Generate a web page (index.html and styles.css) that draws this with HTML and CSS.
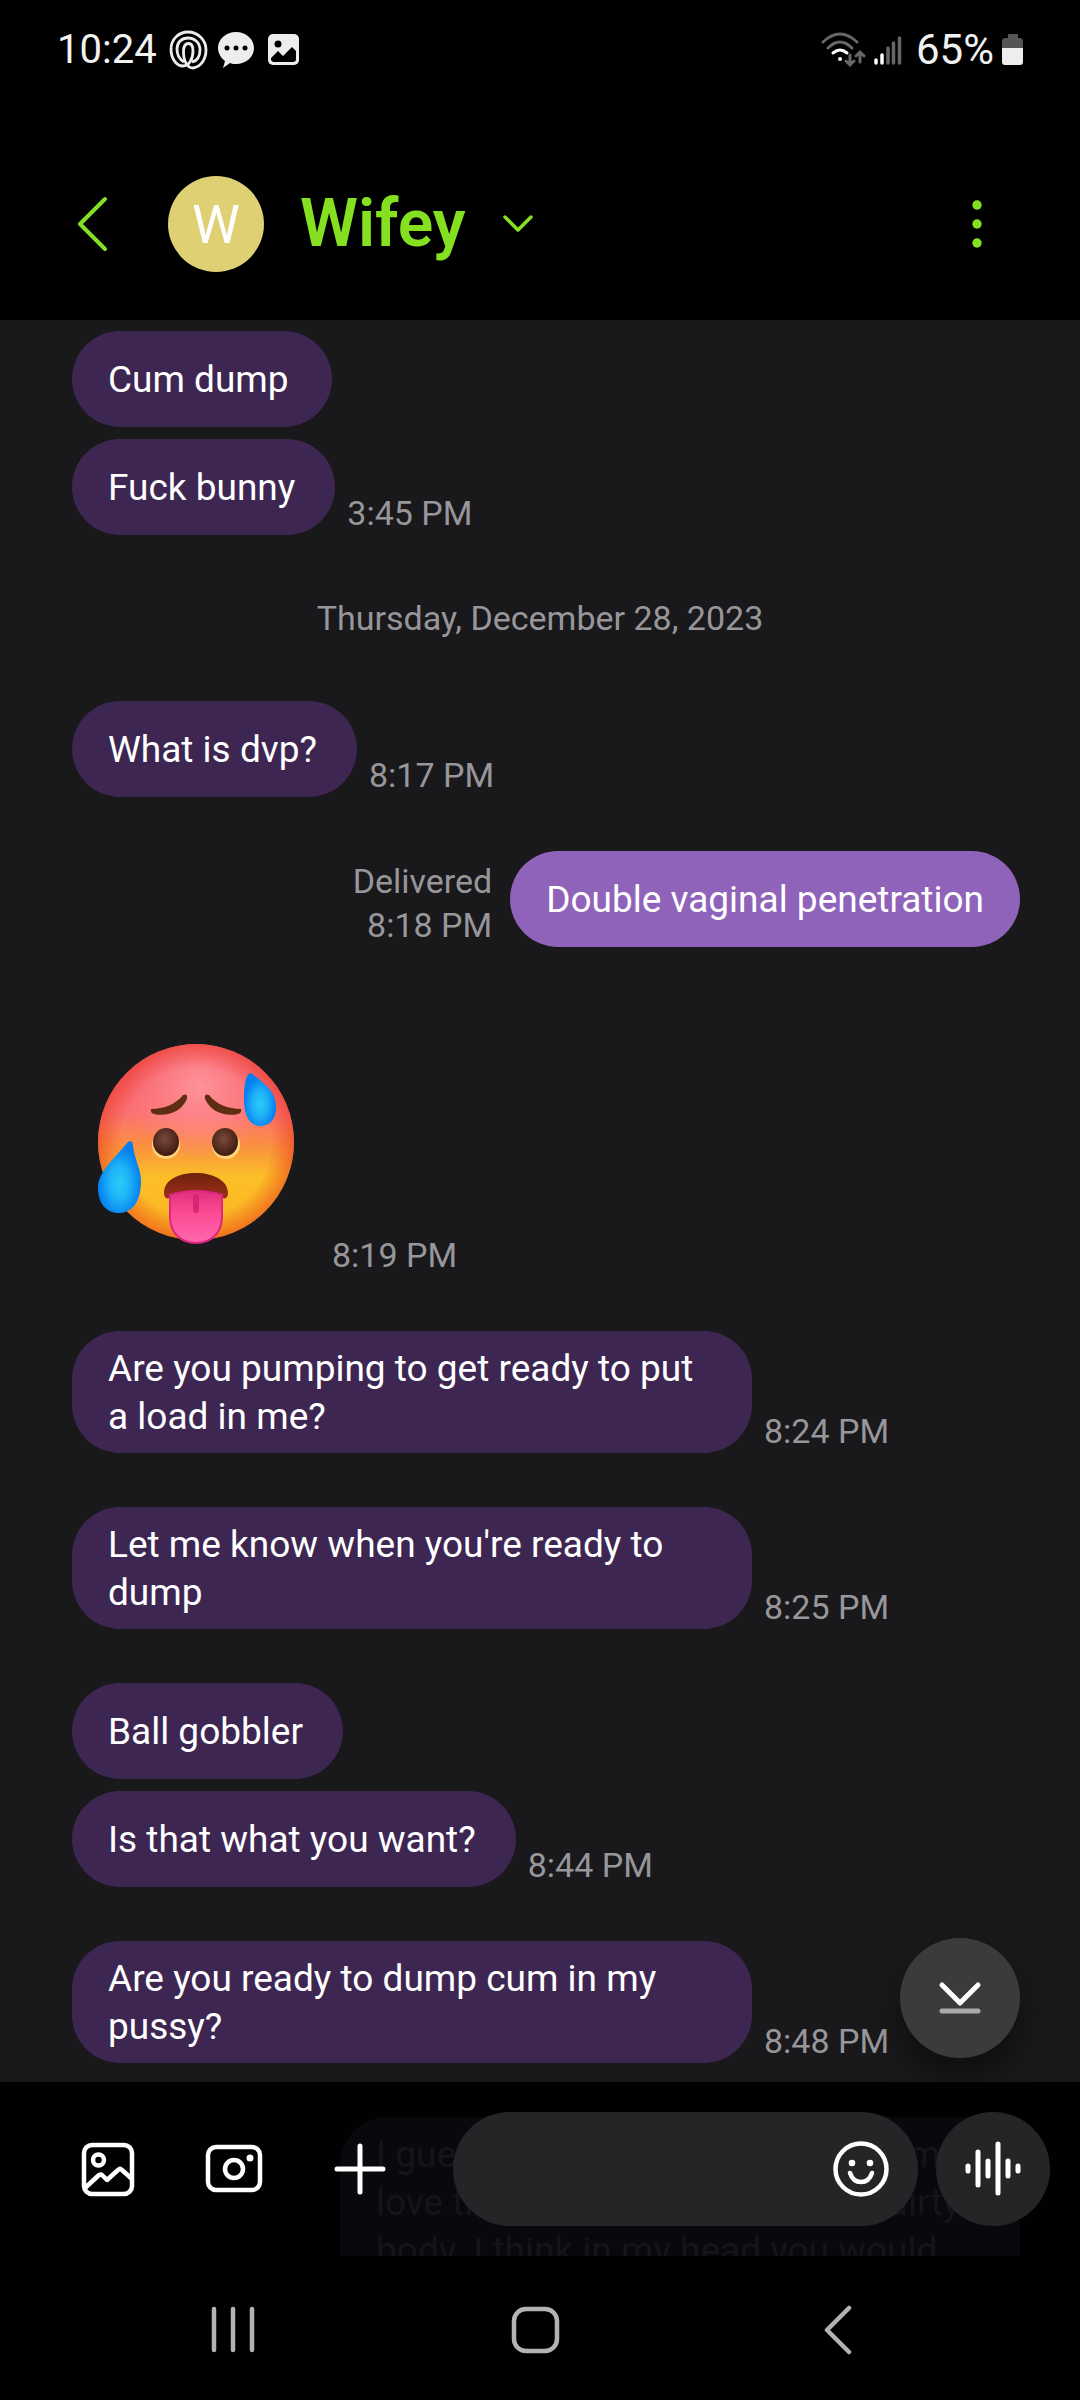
FILE: index.html
```html
<!DOCTYPE html>
<html lang="en">
<head>
<meta charset="utf-8">
<meta name="viewport" content="width=device-width">
<title>Wifey</title>
<link rel="stylesheet" href="styles.css">
</head>
<body>
<div class="screen">
  <div class="status">
    <span class="status-text">10:24</span>
    <svg class="st-ring" width="39" height="40" viewBox="0 0 39 40" fill="none" stroke="#ededed" stroke-width="2.800"><path d="M14 36C20 36 24 29 24 21C24 16 22 13.500 19.500 13.500C16 13.500 14.500 17 14.500 22C14.500 32 19 38 24 38C32 37 37 29 37 20C37 10 29 2 19 2C9 2 2 10 2 19C2 28 7 36 14 36M15 32C10 29 8 25 8 19C8 12.500 12.500 8 19 8C26 8 31 13 31 20C31 26 28 31 23 32"/></svg>
    <svg class="st-bubble" width="38" height="38" viewBox="0 0 38 38"><path fill="#ededed" d="M19 1C29 1 37 8 37 17S29 33 19 33C17 33 15 33 13 32L6 37L8 30C4 27 1 22 1 17C1 8 9 1 19 1Z"/><g fill="#000"><circle cx="10" cy="17" r="2.5"/><circle cx="19" cy="17" r="2.5"/><circle cx="28" cy="17" r="2.5"/></g></svg>
    <svg width="32" height="32" viewBox="0 0 32 32"><rect width="31" height="31" rx="5" fill="#ededed"/><circle cx="10" cy="10" r="3.5" fill="#000"/><path d="M3 24L10 17L15 22L24 13L28 17V25Q28 28 25 28H6Q3 28 3 25Z" fill="#000"/></svg>
    <span class="spacer"></span>
    <svg width="46" height="36" viewBox="0 0 46 36" fill="none" stroke-linecap="round" stroke-width="3"><path stroke="#666" d="M2 10Q19-6 36 10M7 16Q19 4 31 16"/><path stroke="#fff" d="M12 21Q19 15 26 21"/><circle cx="19" cy="27" r="2" fill="#fff"/><path stroke="#666" d="M29 23V32M25 29L29 33L33 29M39 30V21M35 24L39 20L43 24"/></svg>
    <svg class="st-signal" width="28" height="30" viewBox="0 0 28 30" stroke-width="3.5" stroke-linecap="round"><path stroke="#fff" d="M2 25V28M8 20V28"/><path stroke="#666" d="M14 13V28M19.500 8V28M25.500 3V28"/></svg>
    <span class="status-text st-pct">65%</span>
    <svg width="22" height="32" viewBox="0 0 22 32"><path fill="#555" d="M6 0H16V4H18Q21 4 21 8V15H0V8Q0 4 3 4H6Z"/><path fill="#ededed" d="M0 14H21V28Q21 31 18 31H3Q0 31 0 28Z"/></svg>
  </div>

  <header class="header">
    <button class="icon-btn back" aria-label="Back"><svg width="32" height="56" viewBox="0 0 32 56" fill="none" stroke="#86e022" stroke-width="4" stroke-linecap="round" stroke-linejoin="round"><path d="M28 3L3 28L28 53"/></svg></button>
    <span class="avatar">W</span>
    <h1 class="name">Wifey</h1>
    <button class="icon-btn" aria-label="Details"><svg width="32" height="20" viewBox="0 0 32 20" fill="none" stroke="#86e022" stroke-width="3.500" stroke-linecap="round" stroke-linejoin="round"><path d="M3 3L16 16L29 3"/></svg></button>
    <span class="spacer"></span>
    <button class="icon-btn" aria-label="More options"><svg width="12" height="48" viewBox="0 0 12 48" fill="#86e022"><circle cx="6" cy="5" r="4.700"/><circle cx="6" cy="24" r="4.700"/><circle cx="6" cy="43" r="4.700"/></svg></button>
  </header>

  <main class="chat">
    <div class="group">
      <div class="row"><p class="bubble">Cum dump</p></div>
      <div class="row"><p class="bubble">Fuck bunny</p><time class="meta">3:45 PM</time></div>
    </div>
    <p class="date">Thursday, December 28, 2023</p>
    <div class="row"><p class="bubble">What is dvp?</p><time class="meta">8:17 PM</time></div>
    <div class="row sent"><p class="meta">Delivered<br>8:18 PM</p><p class="bubble">Double vaginal penetration</p></div>
    <div class="row">
      <svg class="emoji" role="img" aria-label="Hot face" width="248" height="276" viewBox="0 0 248 276">
        <defs>
          <linearGradient id="face" x1="0" y1="0" x2="0" y2="1"><stop offset="0" stop-color="#f4586a"/><stop offset=".36" stop-color="#fb7272"/><stop offset=".52" stop-color="#fa913f"/><stop offset=".68" stop-color="#fcbf27"/><stop offset="1" stop-color="#fbb321"/></linearGradient>
          <radialGradient id="glow" cx=".52" cy=".22" r=".38"><stop offset="0" stop-color="#ff929b"/><stop offset="1" stop-color="#ff8a90" stop-opacity="0"/></radialGradient>
          <radialGradient id="rim" cx=".5" cy=".5" r=".5"><stop offset=".76" stop-color="#e8331c" stop-opacity="0"/><stop offset="1" stop-color="#e8331c" stop-opacity=".5"/></radialGradient>
          <radialGradient id="drop" cx=".5" cy=".58" r=".5"><stop offset="0" stop-color="#28cdf8"/><stop offset=".45" stop-color="#1fb4f7"/><stop offset="1" stop-color="#057ff0"/></radialGradient>
          <radialGradient id="eye" cx=".45" cy=".4" r=".6"><stop offset="0" stop-color="#7a4a3c"/><stop offset="1" stop-color="#3f1a10"/></radialGradient>
          <linearGradient id="mouth" x1="0" y1="0" x2="0" y2="1"><stop offset="0" stop-color="#6d2408"/><stop offset="1" stop-color="#a02a20"/></linearGradient>
          <linearGradient id="tongue" x1="0" y1="0" x2="0" y2="1"><stop offset="0" stop-color="#e0307c"/><stop offset=".4" stop-color="#fb4a93"/><stop offset="1" stop-color="#ff68ad"/></linearGradient>
        </defs>
        <circle cx="124" cy="141" r="98" fill="url(#face)"/>
        <circle cx="124" cy="141" r="98" fill="url(#glow)"/>
        <circle cx="124" cy="141" r="98" fill="url(#rim)"/>
        <path fill="#5f2e12" d="M79 108C92 108 104 103 111 94Q116 92 115 98C109 111 95 116 82 113Q78 112 79 108ZM169 108C156 108 144 103 137 94Q132 92 133 98C139 111 153 116 166 113Q170 112 169 108Z"/>
        <g fill="#ffd57a"><ellipse cx="94" cy="144" rx="14" ry="14"/><ellipse cx="154" cy="144" rx="14" ry="14"/></g>
        <g fill="url(#eye)"><ellipse cx="94" cy="141" rx="13" ry="14"/><ellipse cx="153" cy="141" rx="13" ry="14"/></g>
        <path fill="url(#mouth)" d="M92 192C92 179 106 172 124 172S156 180 156 192Q156 199 150 197H98Q92 199 92 192Z"/>
        <path fill="url(#tongue)" stroke="#e0257e" stroke-width="2" d="M98 194Q124 186 150 194V216C150 232 139 242 124 242S98 232 98 216Z"/>
        <path d="M124 196V209" stroke="#d82674" stroke-width="6" stroke-linecap="round"/>
        <path fill="url(#drop)" d="M56 141C59 139 61 141 61 145C63 160 69 168 69 180C69 202 59 212 47 212C34 212 26 202 26 187C26 172 38 162 56 141Z"/>
        <path fill="url(#drop)" d="M179 72C174 72 172 84 172 98C172 116 178 125 189 125C199 125 205 116 204 104C203 90 193 83 179 72Z"/>
      </svg>
      <time class="meta">8:19 PM</time>
    </div>
    <div class="row"><p class="bubble">Are you pumping to get ready to put a load in me?</p><time class="meta">8:24 PM</time></div>
    <div class="row"><p class="bubble">Let me know when you're ready to dump</p><time class="meta">8:25 PM</time></div>
    <div class="group">
      <div class="row"><p class="bubble">Ball gobbler</p></div>
      <div class="row"><p class="bubble">Is that what you want?</p><time class="meta">8:44 PM</time></div>
    </div>
    <div class="row"><p class="bubble">Are you ready to dump cum in my pussy?</p><time class="meta">8:48 PM</time></div>
    <button class="jump" aria-label="Jump to latest"><svg width="44" height="34" viewBox="0 0 44 34" fill="none" stroke-width="5" stroke-linecap="round" stroke-linejoin="round"><path stroke="#fff" d="M4 4L22 22L40 4"/><path stroke="#aaa8aa" d="M4 30H40"/></svg></button>
  </main>

  <footer class="composer">
    <div class="under" aria-hidden="true">
      <div class="under-line"><span>I gues</span><span>me</span></div>
      <div class="under-line"><span>love th</span><span>dirty</span></div>
      <div>body. I think in my head you would</div>
    </div>
    <button class="icon-btn tool" aria-label="Gallery"><svg width="54" height="56" viewBox="0 0 54 56" fill="none" stroke="#fff" stroke-width="4.500" stroke-linejoin="round"><rect x="3" y="4" width="48" height="49" rx="8"/><circle cx="17.500" cy="19" r="5.500"/><path d="M4 47L18 34Q20 33 21 34L26 39L37 29Q39 27 41 29L51 38"/></svg></button>
    <button class="icon-btn tool" aria-label="Camera"><svg width="58" height="50" viewBox="0 0 58 50" fill="none" stroke="#fff" stroke-width="4.500"><rect x="3" y="3" width="52" height="43" rx="8"/><circle cx="29" cy="25" r="9"/><circle cx="45" cy="14" r="3.500" fill="#fff" stroke="none"/></svg></button>
    <button class="icon-btn tool" aria-label="Add"><svg width="54" height="54" viewBox="0 0 54 54" fill="none" stroke="#fff" stroke-width="5" stroke-linecap="round"><path d="M27 4V50M4 27H50"/></svg></button>
    <div class="field">
      <input class="input" type="text" aria-label="Message">
      <button class="icon-btn" aria-label="Emoji"><svg width="58" height="58" viewBox="0 0 58 58" fill="none" stroke="#fff" stroke-width="4.500" stroke-linecap="round"><circle cx="29" cy="29" r="25.500"/><path d="M18 33Q21 42 29 42T40 33"/><g fill="#fff" stroke="none"><circle cx="20" cy="23" r="3.300"/><circle cx="38" cy="23" r="3.300"/></g></svg></button>
    </div>
    <button class="voice" aria-label="Voice message"><svg width="58" height="58" viewBox="0 0 58 58" stroke="#fff" stroke-width="5" stroke-linecap="round"><path d="M4 26V31M14 12V45M24 21V36M34 4V53M44 21V36M54 26V31"/></svg></button>
  </footer>

  <nav class="nav">
    <button class="icon-btn" aria-label="Recents"><svg width="44" height="50" viewBox="0 0 44 50" stroke="#b3b3b3" stroke-width="4.500" stroke-linecap="round"><path d="M3 4V45M22 4V45M41 4V45"/></svg></button>
    <button class="icon-btn" aria-label="Home"><svg width="50" height="50" viewBox="0 0 50 50" fill="none" stroke="#b3b3b3" stroke-width="4.500"><rect x="4" y="4" width="43" height="42" rx="12"/></svg></button>
    <button class="icon-btn" aria-label="Back"><svg width="32" height="50" viewBox="0 0 32 50" fill="none" stroke="#b3b3b3" stroke-width="4.500" stroke-linecap="round" stroke-linejoin="round"><path d="M27 3L5 25L27 47"/></svg></button>
  </nav>
</div>
</body>
</html>
```
FILE: styles.css
```css
* { box-sizing: border-box; margin: 0; }

body {
  background: #000;
  color: #fff;
  font-family: Roboto, "Liberation Sans", sans-serif;
}

svg { display: block; flex: none; }

button {
  padding: 0;
  border: 0;
  background: none;
  color: inherit;
  font: inherit;
}

.screen {
  display: flex;
  flex-direction: column;
  min-height: 100vh;
}

.spacer { flex: 1; }

.icon-btn {
  display: flex;
  align-items: center;
  justify-content: center;
  flex: none;
}

/* Status bar */
.status {
  display: flex;
  align-items: center;
  height: 100px;
  padding: 0 56px 0 57px;
}
.status-text {
  font-size: 40px;
  line-height: 48px;
  color: #f2f2f2;
}
.st-ring { margin-left: 12px; }
.st-bubble { margin: 0 13px 0 9px; }
.st-signal { margin-left: 7px; }
.st-pct {
  margin: 0 8px 0 14px;
  font-size: 42px;
}

/* Conversation header */
.header {
  display: flex;
  align-items: center;
  height: 220px;
  padding: 28px 97px 0 77px;
}
.avatar {
  display: flex;
  align-items: center;
  justify-content: center;
  width: 96px;
  height: 96px;
  margin: 0 36px 0 59px;
  border-radius: 50%;
  background: #dfd074;
  font-size: 54px;
}
.name {
  margin-right: 36px;
  color: #86e022;
  font-size: 66px;
  font-weight: 600;
  line-height: 76px;
}

/* Messages */
.chat {
  position: relative;
  display: flex;
  flex: 1;
  flex-direction: column;
  gap: 54px;
  padding: 11px 60px 19px 72px;
  background: #19181a;
}
.group {
  display: flex;
  flex-direction: column;
  gap: 12px;
}
.row {
  display: flex;
  align-items: flex-end;
  gap: 12px;
}
.sent {
  justify-content: flex-end;
  gap: 18px;
  text-align: right;
}
.bubble {
  display: flex;
  align-items: center;
  min-width: 260px;
  max-width: 680px;
  min-height: 96px;
  padding: 14px 40px 12px 36px;
  border-radius: 48px;
  background: #3e2653;
  font-size: 37px;
  line-height: 48px;
}
.sent .bubble {
  padding-right: 36px;
  background: #9063bb;
}
.meta,
.date {
  color: #97969a;
  font-size: 34px;
  line-height: 44px;
}
.meta { white-space: nowrap; }
.date {
  padding: 7px 12px 7px 0;
  text-align: center;
}
.jump {
  position: absolute;
  right: 60px;
  bottom: 24px;
  display: flex;
  align-items: center;
  justify-content: center;
  width: 120px;
  height: 120px;
  border-radius: 50%;
  background: #3c3a3d;
  box-shadow: 0 16px 32px rgba(0, 0, 0, .45);
}

/* Composer */
.composer {
  position: relative;
  display: flex;
  align-items: center;
  height: 174px;
  padding: 0 30px 0 66px;
  overflow: hidden;
  background: #010101;
}
.under {
  position: absolute;
  top: 35px;
  right: 60px;
  width: 680px;
  padding: 14px 36px 12px;
  border-radius: 48px 48px 0 0;
  background: #09080d;
  color: #151419;
  font-size: 37px;
  line-height: 48px;
  white-space: nowrap;
}
.under-line {
  display: flex;
  justify-content: space-between;
  padding-right: 24px;
}
.tool {
  position: relative;
  width: 84px;
  height: 84px;
  margin-right: 42px;
}
.field {
  position: relative;
  display: flex;
  align-items: center;
  flex: 1;
  min-width: 0;
  height: 114px;
  margin: 0 18px 0 9px;
  padding: 0 28px 0 36px;
  border-radius: 57px;
  background: #252527;
}
.input {
  flex: 1;
  min-width: 0;
  height: 60px;
  padding: 0;
  border: 0;
  outline: 0;
  background: none;
  color: #fff;
  font: inherit;
  font-size: 37px;
}
.voice {
  position: relative;
  display: flex;
  align-items: center;
  justify-content: center;
  flex: none;
  width: 114px;
  height: 114px;
  border-radius: 50%;
  background: #252527;
}

/* System navigation */
.nav {
  display: grid;
  grid-template-columns: repeat(3, 1fr);
  align-items: center;
  height: 144px;
  padding: 4px 91px 0 82px;
}
```
